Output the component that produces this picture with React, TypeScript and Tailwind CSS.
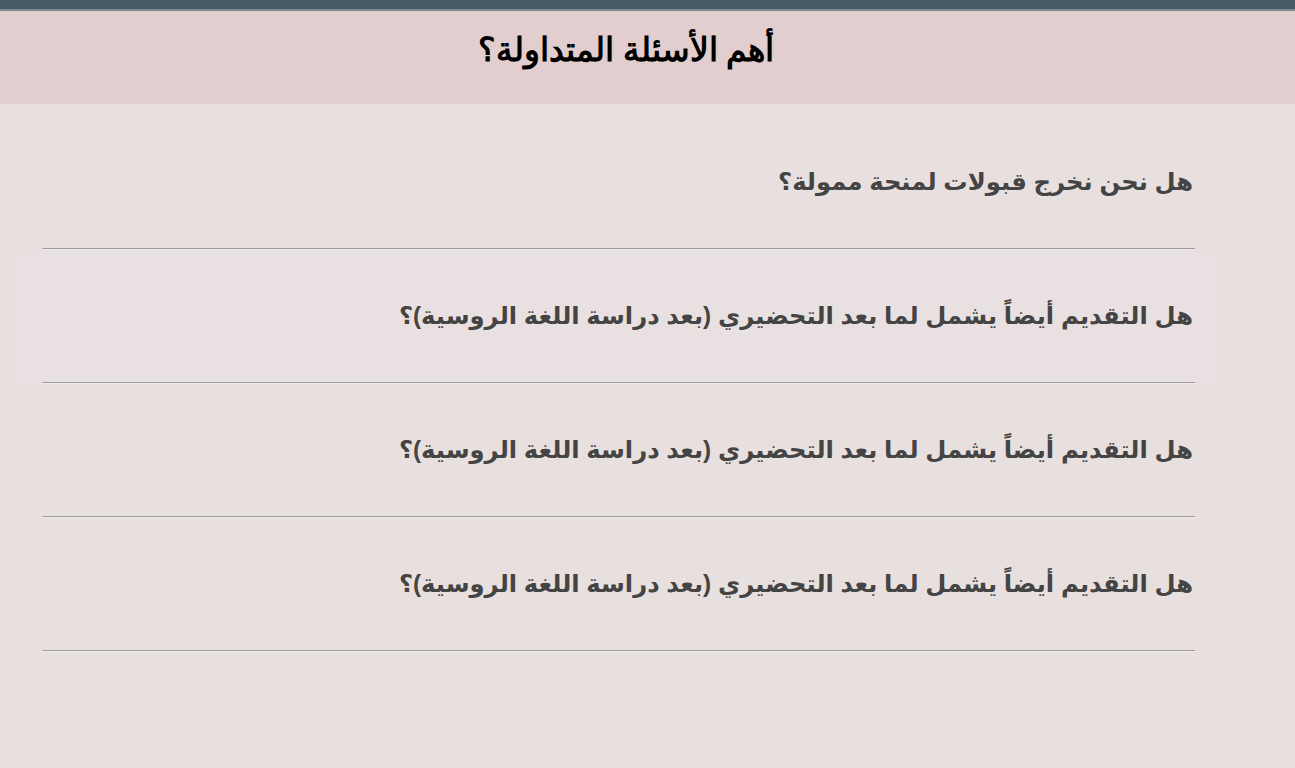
const questions = [
  "هل نحن نخرج قبولات لمنحة ممولة؟",
  "هل التقديم أيضاً يشمل لما بعد التحضيري (بعد دراسة اللغة الروسية)؟",
  "هل التقديم أيضاً يشمل لما بعد التحضيري (بعد دراسة اللغة الروسية)؟",
  "هل التقديم أيضاً يشمل لما بعد التحضيري (بعد دراسة اللغة الروسية)؟",
]

export default function App() {
  return (
    <div dir="rtl" className="min-h-[768px] bg-[#e8dfdf] font-['Liberation_Sans','DejaVu_Sans',sans-serif]">
      <div className="h-[9px] bg-[#455a64]" />
      <div className="h-[2px] bg-[#7d8a90]" />
      <header className="flex h-[93px] items-center justify-center bg-[#e2cece] pr-[43px]">
        <h2 className="pb-[14px] font-['Liberation_Serif','DejaVu_Serif',serif] text-[33px] font-bold text-black">
          أهم الأسئلة المتداولة؟
        </h2>
      </header>

      <div className="pt-[12px]">
        {questions.map((q, i) => (
          <div key={i} className={i === 1 ? "mr-[73px] ml-[13px] bg-[#e9e1e1]" : ""}>
            <div className={i === 1 ? "mr-[27px] ml-[29px]" : "mr-[100px] ml-[42px]"}>
              <div className="flex h-[132px] items-center pr-[2px]">
                <p className="text-[24.25px] font-bold text-[#444]">{q}</p>
              </div>
              <div className="border-t border-[#9a9a9a]" />
              <div className="h-px bg-[#f3eeee]" />
            </div>
          </div>
        ))}
      </div>
    </div>
  )
}
